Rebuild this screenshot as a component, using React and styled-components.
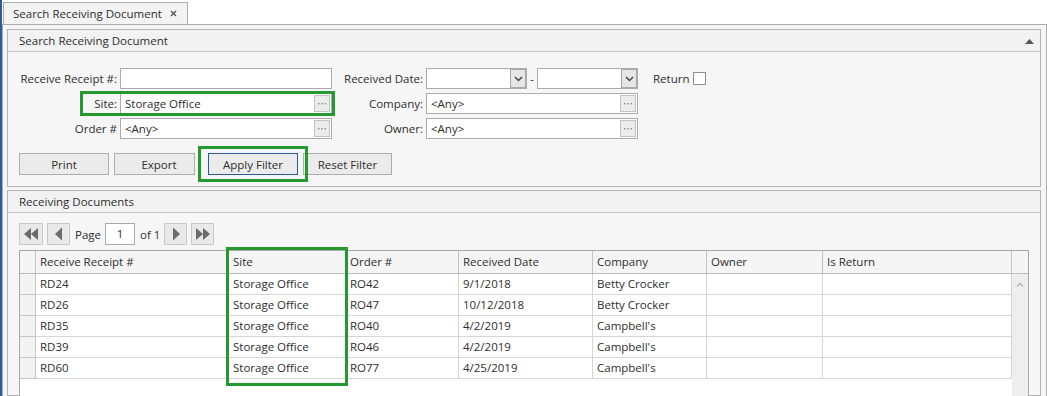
import styled, { createGlobalStyle } from "styled-components"

const GlobalStyle = createGlobalStyle`
  html, body { margin: 0; padding: 0; background: #fff; }
  body {
    font-family: "Open Sans", "Noto Sans", sans-serif;
    font-size: 11.5px;
    color: #2e2e2e;
  }
  * { box-sizing: border-box; }
`

const GREEN = "#23992f"

const Window = styled.div`
  display: flex;
  width: 1047px;
  height: 396px;
  overflow: hidden;
`

const Accent = styled.div`
  flex: none;
  width: 2px;
  background: #2d5b9b;
`

const Main = styled.div`
  flex: 1;
  display: flex;
  flex-direction: column;
  min-width: 0;
`

const TabStrip = styled.div`
  height: 24px;
  display: flex;
  align-items: flex-end;
  padding-left: 1px;
  background: #fff;
`

const Tab = styled.div`
  width: 185px;
  height: 22px;
  display: flex;
  align-items: center;
  justify-content: space-between;
  padding: 0 10px 0 9px;
  border: 1px solid #acacac;
  border-bottom: none;
  background: #f3f3f3;
`

const Content = styled.div`
  flex: 1;
  display: flex;
  flex-direction: column;
  gap: 3px;
  padding: 4px 5px 0 4px;
  border: 1px solid #acacac;
  border-bottom: none;
  background: #f5f5f5;
  min-height: 0;
`

const Panel = styled.section`
  border: 1px solid #b4b4b4;
  background: #f6f6f6;
  display: flex;
  flex-direction: column;
  flex: ${p => (p.$grow ? 1 : "none")};
  min-height: 0;
`

const PanelHeader = styled.div`
  height: 22px;
  display: flex;
  align-items: center;
  justify-content: space-between;
  padding: 0 6px 0 11px;
  background: #f2f2f2;
  border-bottom: 1px solid #c6c6c6;
`

const PanelBody = styled.div`
  padding: ${p => p.$pad};
  display: flex;
  flex-direction: column;
  flex: 1;
  min-height: 0;
`

const FormGrid = styled.div`
  display: grid;
  grid-template-columns: 99px 212px 90px 212px auto;
  grid-auto-rows: 21px;
  column-gap: 2px;
  row-gap: 4px;
`

const Label = styled.label`
  text-align: right;
  line-height: 21px;
  padding-right: 1px;
  white-space: nowrap;
`

const TextBox = styled.div`
  height: 21px;
  border: 1px solid #ababab;
  background: #fff;
  display: flex;
  align-items: center;
  padding: 0 1px 0 4px;
  gap: 4px;
`

const BoxText = styled.span`
  flex: 1;
  white-space: nowrap;
`

const Ellipsis = styled.span`
  width: 16px;
  height: 17px;
  border: 1px solid #c3c3c3;
  background: #ececec;
  display: flex;
  align-items: center;
  justify-content: center;
`

const DropBtn = styled.span`
  width: 16px;
  height: 19px;
  border: 1px solid #a9a9a9;
  background: #e6e6e6;
  display: flex;
  align-items: center;
  justify-content: center;
`

const DateRange = styled.div`
  display: flex;
  align-items: center;
`

const DateBox = styled(TextBox)`
  width: 101px;
  padding: 0 0 0 4px;
  justify-content: flex-end;
`

const Dash = styled.span`
  width: 10px;
  text-align: center;
`

const ReturnCell = styled.div`
  display: flex;
  align-items: center;
  gap: 4px;
  padding-left: 13px;
`

const Check = styled.span`
  width: 13px;
  height: 13px;
  border: 1px solid #8f8f8f;
  background: #fff;
`

const SiteGroup = styled.div`
  grid-column: span 2;
  display: grid;
  grid-template-columns: 99px 212px;
  column-gap: 2px;
  position: relative;

  &::after {
    content: "";
    position: absolute;
    left: 61px;
    top: -2px;
    right: -3px;
    bottom: -2px;
    border: 3px solid ${GREEN};
    pointer-events: none;
  }
`

const ButtonRow = styled.div`
  display: flex;
  gap: 5px;
  margin-top: 14px;
`

const Button = styled.button`
  width: ${p => p.$w || 90}px;
  height: 22px;
  font: inherit;
  color: inherit;
  background: #ebebeb;
  border: 1px solid ${p => (p.$focused ? "#2b5a9c" : "#adadad")};
  padding: 0 0 0 ${p => p.$shift || 0}px;
`

const Highlight = styled.div`
  position: relative;
  margin-left: 8px;

  &::after {
    content: "";
    position: absolute;
    left: -10px;
    right: -10px;
    top: -7px;
    bottom: -7px;
    border: 3px solid ${GREEN};
    pointer-events: none;
  }
`

const Pager = styled.div`
  display: flex;
  align-items: center;
  height: 22px;
`

const PageBtn = styled.span`
  width: ${p => p.$w || 23}px;
  height: 22px;
  margin-right: ${p => p.$mr || 0}px;
  border: 1px solid #c8c8c8;
  background: #e9e9e9;
  display: flex;
  align-items: center;
  justify-content: center;
`

const PageText = styled.span`
  margin: 0 ${p => p.$mr || 0}px 0 ${p => p.$ml || 0}px;
`

const PageInput = styled.span`
  width: 30px;
  height: 22px;
  border: 1px solid #ababab;
  background: #fff;
  text-align: center;
  line-height: 20px;
`

const Grid = styled.div`
  position: relative;
  margin-top: 5px;
  height: 170px;
  flex: none;
  border: 1px solid #a8a8a8;
  background: #fff;
  display: flex;
  flex-direction: column;
`

const cols = [16, 193, 117, 113, 134, 114, 116, 189]

const HeadRow = styled.div`
  display: flex;
  height: 23px;
  background: #f5f5f5;
  border-bottom: 1px solid #bdbdbd;
`

const HeadCell = styled.div`
  width: ${p => p.$w}px;
  flex: none;
  padding-left: 4px;
  line-height: 22px;
  border-right: 1px solid #c3c3c3;
  white-space: nowrap;
  &:last-child { border-right: none; }
`

const GridBody = styled.div`
  flex: 1;
  display: flex;
  min-height: 0;
`

const Rows = styled.div`
  flex: 1;
`

const Row = styled.div`
  display: flex;
  height: 21px;
`

const Cell = styled.div`
  width: ${p => p.$w}px;
  flex: none;
  padding-left: 4px;
  line-height: 20px;
  white-space: nowrap;
  border-right: 1px solid #d6d6d6;
  border-bottom: 1px solid #d6d6d6;
  background: ${p => (p.$indicator ? "#f3f3f3" : "#fff")};
  ${p => p.$indicator && "border-color: #c6c6c6;"}
`

const ScrollBar = styled.div`
  width: 16px;
  flex: none;
  background: #eeeeee;
  display: flex;
  justify-content: center;
  padding-top: 8px;
`

const SiteMark = styled.div`
  position: absolute;
  left: 206px;
  top: -4px;
  width: 122px;
  height: 139px;
  border: 3px solid ${GREEN};
  pointer-events: none;
`

const Close = () => (
  <svg width="7" height="7" viewBox="0 0 7 7">
    <path d="M1 1L6 6M6 1L1 6" stroke="#555" strokeWidth="1.4" />
  </svg>
)

const Dots = () => (
  <svg width="10" height="3" viewBox="0 0 10 3">
    <g fill="#8a8a8a">
      <rect x="1" y="1" width="1.4" height="1.4" />
      <rect x="4.3" y="1" width="1.4" height="1.4" />
      <rect x="7.6" y="1" width="1.4" height="1.4" />
    </g>
  </svg>
)

const Chevron = () => (
  <svg width="9" height="6" viewBox="0 0 9 6">
    <path d="M1 1L4.5 4.5L8 1" stroke="#444" strokeWidth="1.5" fill="none" />
  </svg>
)

const Collapse = () => (
  <svg width="9" height="6" viewBox="0 0 9 6">
    <path d="M0 6L4.5 1L9 6Z" fill="#555" />
  </svg>
)

const Arrow = ({ dir, double }) => {
  const flip = dir === "right" ? "scale(-1,1) translate(-16,0)" : undefined
  return (
    <svg width="16" height="14" viewBox="0 0 16 14">
      <g transform={flip} fill="#6b6b6b">
        {double ? (
          <>
            <path d="M1 7L8 1V13Z" />
            <path d="M8 7L15 1V13Z" />
          </>
        ) : (
          <path d="M4 7L11 0.5V13.5Z" />
        )}
      </g>
    </svg>
  )
}

const Caret = () => (
  <svg width="8" height="5" viewBox="0 0 8 5">
    <path d="M1 4.5L4 1.5L7 4.5" stroke="#b4b4b4" strokeWidth="1.3" fill="none" />
  </svg>
)

const headers = ["", "Receive Receipt #", "Site", "Order #", "Received Date", "Company", "Owner", "Is Return"]

const docs = [
  ["RD24", "Storage Office", "RO42", "9/1/2018", "Betty Crocker"],
  ["RD26", "Storage Office", "RO47", "10/12/2018", "Betty Crocker"],
  ["RD35", "Storage Office", "RO40", "4/2/2019", "Campbell's"],
  ["RD39", "Storage Office", "RO46", "4/2/2019", "Campbell's"],
  ["RD60", "Storage Office", "RO77", "4/25/2019", "Campbell's"],
]

const Lookup = ({ value }) => (
  <TextBox>
    <BoxText>{value}</BoxText>
    <Ellipsis><Dots /></Ellipsis>
  </TextBox>
)

const DateSelect = () => (
  <DateBox>
    <DropBtn><Chevron /></DropBtn>
  </DateBox>
)

export default function App() {
  return (
    <>
      <GlobalStyle />
      <Window>
        <Accent />
        <Main>
          <TabStrip>
            <Tab>
              <span>Search Receiving Document</span>
              <Close />
            </Tab>
          </TabStrip>
          <Content>
            <Panel>
              <PanelHeader>
                <span>Search Receiving Document</span>
                <Collapse />
              </PanelHeader>
              <PanelBody $pad="16px 11px 11px 11px">
                <FormGrid>
                  <Label>Receive Receipt #:</Label>
                  <TextBox />
                  <Label>Received Date:</Label>
                  <DateRange>
                    <DateSelect />
                    <Dash>-</Dash>
                    <DateSelect />
                  </DateRange>
                  <ReturnCell>
                    Return <Check />
                  </ReturnCell>

                  <SiteGroup>
                    <Label>Site:</Label>
                    <Lookup value="Storage Office" />
                  </SiteGroup>
                  <Label>Company:</Label>
                  <Lookup value="<Any>" />
                  <span />

                  <Label>Order #</Label>
                  <Lookup value="<Any>" />
                  <Label>Owner:</Label>
                  <Lookup value="<Any>" />
                </FormGrid>
                <ButtonRow>
                  <Button>Print</Button>
                  <Button $w={81} $shift={9}>Export</Button>
                  <Highlight>
                    <Button $focused>Apply Filter</Button>
                  </Highlight>
                  <Button $w={89}>Reset Filter</Button>
                </ButtonRow>
              </PanelBody>
            </Panel>

            <Panel $grow>
              <PanelHeader>
                <span>Receiving Documents</span>
              </PanelHeader>
              <PanelBody $pad="10px 11px 0 11px">
                <Pager>
                  <PageBtn $w={24} $mr={4}><Arrow double /></PageBtn>
                  <PageBtn><Arrow /></PageBtn>
                  <PageText $ml={5} $mr={4}>Page</PageText>
                  <PageInput>1</PageInput>
                  <PageText $ml={5} $mr={4}>of 1</PageText>
                  <PageBtn $mr={4}><Arrow dir="right" /></PageBtn>
                  <PageBtn><Arrow dir="right" double /></PageBtn>
                </Pager>
                <Grid>
                  <HeadRow>
                    {headers.map((h, i) => (
                      <HeadCell key={i} $w={cols[i]}>{h}</HeadCell>
                    ))}
                    <HeadCell $w={16} />
                  </HeadRow>
                  <GridBody>
                    <Rows>
                      {docs.map(d => (
                        <Row key={d[0]}>
                          <Cell $w={cols[0]} $indicator />
                          {[...d, "", ""].map((v, i) => (
                            <Cell key={i} $w={cols[i + 1]}>{v}</Cell>
                          ))}
                        </Row>
                      ))}
                    </Rows>
                    <ScrollBar><Caret /></ScrollBar>
                  </GridBody>
                  <SiteMark />
                </Grid>
              </PanelBody>
            </Panel>
          </Content>
        </Main>
      </Window>
    </>
  )
}
